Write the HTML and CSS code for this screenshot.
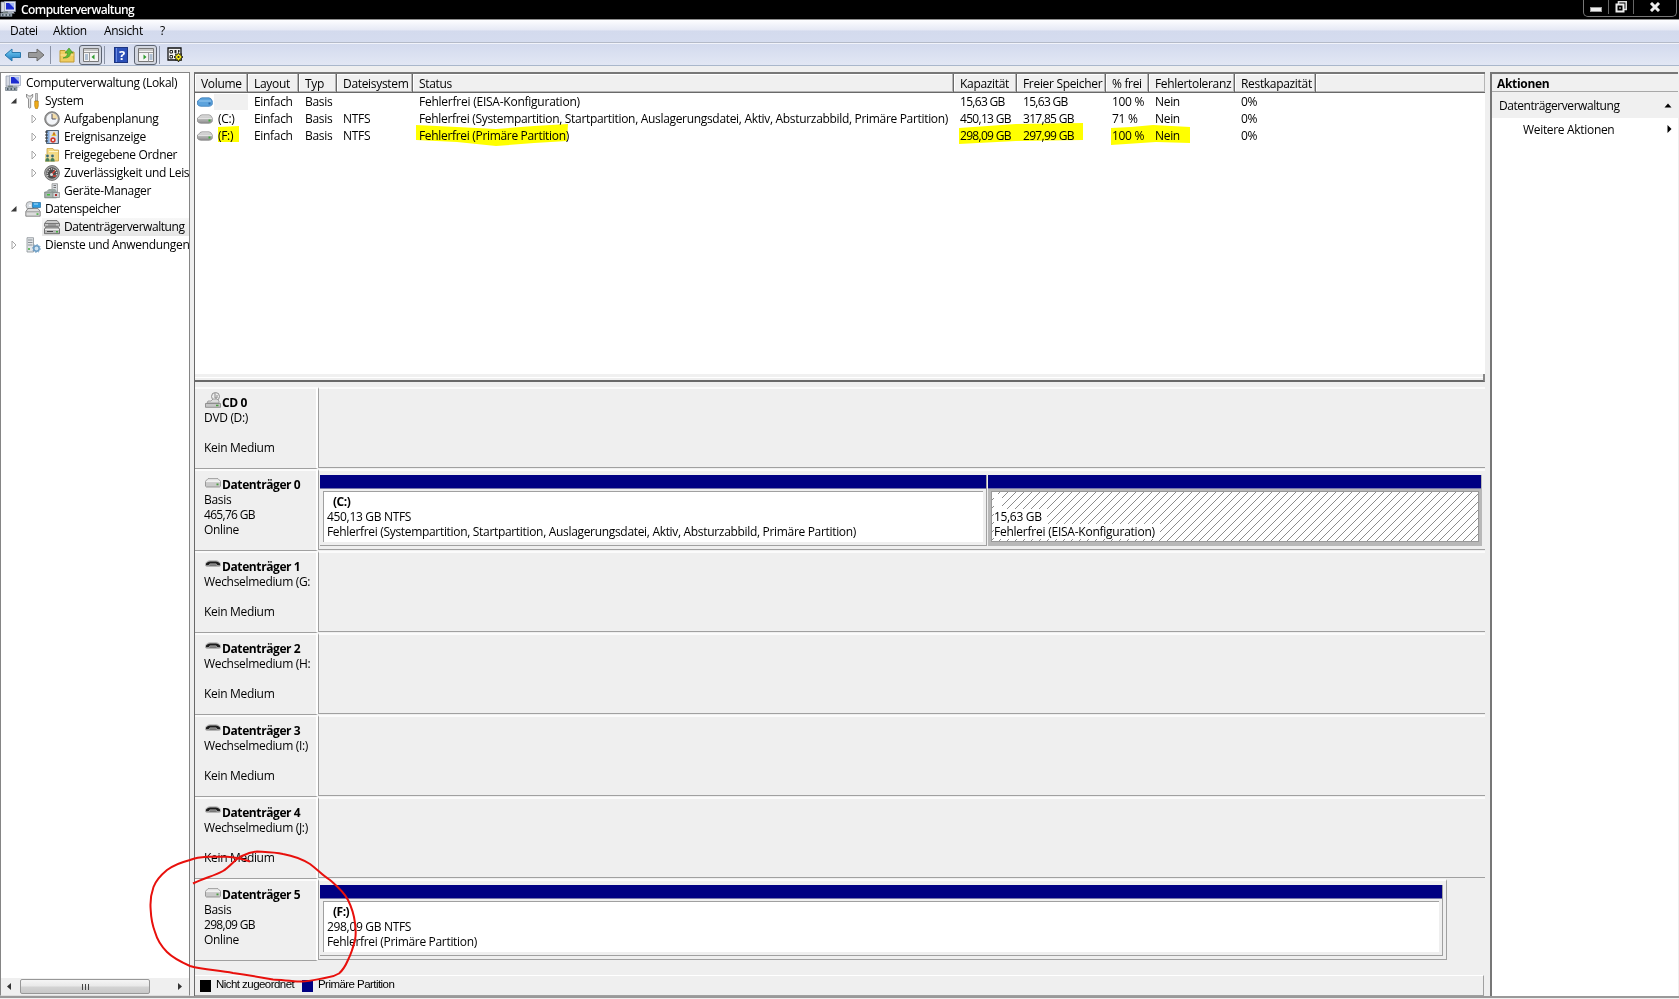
FILE: index.html
```html
<!DOCTYPE html>
<html lang="de">
<head>
  <meta charset="UTF-8">
  <meta name="viewport" content="width=device-width, initial-scale=1.0">
  <title>Computerverwaltung</title>
  <link rel="stylesheet" href="styles.css">
</head>
<body>
  <!-- Symbole -->
  <svg class="defs" width="0" height="0">
    <defs>
      <linearGradient id="metal" x1="0" y1="0" x2="0" y2="1"><stop offset="0" stop-color="#e4e4e4"/><stop offset="1" stop-color="#8c8c8c"/></linearGradient>
      <linearGradient id="blue" x1="0" y1="0" x2="0" y2="1"><stop offset="0" stop-color="#7fd4f7"/><stop offset="1" stop-color="#1878c0"/></linearGradient>
      <pattern id="hatch" width="8" height="8" patternUnits="userSpaceOnUse"><path d="M-1 9L9-1M-1 1L1-1M7 9L9 7" stroke="#8c8c8c" stroke-width="1"/></pattern>
    </defs>
    <symbol id="i-computer" viewBox="0 0 16 16">
      <path d="M1 1h4v10H1z" fill="#d5d9e2" stroke="#8a93a5" stroke-width=".7"/>
      <path d="M4.500 .5h11v10h-11z" fill="#dfe3ee" stroke="#9aa3b8" stroke-width=".7"/>
      <path d="M6 2h8v6.500H6z" fill="#1c2cd0"/><path d="M9 2h5v5z" fill="#9fb4f4"/>
      <path d="M8 10.500h5l2 2H7z" fill="#c2c8d4"/>
      <path d="M.5 12h11.500v3.500H.5z" fill="#a9b3bd" stroke="#5f6c76" stroke-width=".6"/><path d="M2 13h1.500v2H2zM5.500 13H7v2H5.500zM9 13h1.500v2H9z" fill="#4f5f68"/><path d="M3 10.700h5V12H3z" fill="#75837f"/>
    </symbol>
    <symbol id="i-disk" viewBox="0 0 16 10">
      <path d="M1 4Q3 .8 5 .8h7q2 0 3.300 3.200v3.500Q14 9.300 12 9.300H4Q1.500 9.300.5 7.500V4z" fill="url(#metal)" stroke="#777" stroke-width=".6"/>
      <path d="M1 4.300h14" stroke="#f7f7f7" stroke-width=".8"/><rect x="11.500" y="5.500" width="2" height="2" fill="#3fae3a"/>
    </symbol>
    <symbol id="i-diskblue" viewBox="0 0 16 10">
      <path d="M1 4Q3 .8 5 .8h7q2 0 3.300 3.200v3.500Q14 9.300 12 9.300H4Q1.500 9.300.5 7.500V4z" fill="#5da3dc" stroke="#2f74b4" stroke-width=".7"/>
      <path d="M2 4h12" stroke="#9fd0f4" stroke-width=".9"/><rect x="11.500" y="5.500" width="2" height="2" fill="#2c6aa8"/>
    </symbol>
    <symbol id="i-flat" viewBox="0 0 16 10">
      <path d="M3 .7h10l2.500 2.500v5l-1 .8h-13l-1-.8V3.200z" fill="#c9c9c9" stroke="#858585" stroke-width=".8"/>
      <path d="M3 1.300h10l1.700 1.900H1.300z" fill="#ececec"/>
      <path d="M.8 3.600h14.400" stroke="#f4f4f4"/><path d="M11.500 5.500h2v1.800h-2z" fill="#4a9c40"/>
    </symbol>
    <symbol id="i-removable" viewBox="0 0 16 8">
      <path d="M0 4Q2 .3 5 .3h6q3 0 5 3.700v1.500q-1 1.500-3 1.500H3Q1 7 0 5.500z" fill="#b5b5b5"/>
      <path d="M1 3.500Q3 1.500 5 1.500h6q2 0 4 2v1.700h-2.500L11 3.500H5L3.500 5.200H1z" fill="#1c1c1c"/>
      <path d="M5 4.200h6l1 1.800H4z" fill="#777"/>
    </symbol>
    <symbol id="i-cd" viewBox="0 0 16 16">
      <circle cx="10.500" cy="4.500" r="4" fill="#ededed" stroke="#8e8e8e"/><path d="M10 1v5h2M12 3v3" stroke="#888" fill="none"/>
      <path d="M3 9h3l2-2h4l2 2v2H2z" fill="#ddd" stroke="#909090" stroke-width=".8"/>
      <path d="M.5 11.500h15v3.800H.5z" fill="#c6c6c6" stroke="#7f7f7f" stroke-width=".8"/><path d="M11 12.700h2.500v1.500H11z" fill="#4a9c40"/>
    </symbol>
    <symbol id="i-tools" viewBox="0 0 16 16">
      <path d="M1.500 1v3l2 2v8.500q1 1.300 2.200 0V6l2-2V1L6 3H3.500z" fill="#e4e4e4" stroke="#777" stroke-width=".8"/>
      <path d="M10.500.5h2V8h-2z" fill="#ccc" stroke="#777" stroke-width=".6"/><path d="M9.700 8h3.600v5l-.8 2.500h-2l-.8-2.500z" fill="#f0ac18" stroke="#a87408" stroke-width=".6"/>
    </symbol>
    <symbol id="i-clock" viewBox="0 0 16 16">
      <circle cx="8" cy="8" r="7.300" fill="#9b9b9b" stroke="#666" stroke-width=".8"/><circle cx="8" cy="8" r="5.700" fill="#f3f5f8"/>
      <path d="M8 8V2.300A5.700 5.700 0 0 1 13.700 8z" fill="#f2dca8"/><path d="M8 3v5h3.800" fill="none" stroke="#556"/>
    </symbol>
    <symbol id="i-event" viewBox="0 0 16 16">
      <path d="M2.500 1.500h12v13h-12z" fill="#86aede" stroke="#456" stroke-width=".9"/><path d="M5.500 2h8v12h-8z" fill="#d9dde9"/>
      <path d="M1 3h3M1 6h3M1 9h3M1 12h3" stroke="#333"/><path d="M10 2.500l2.700 4.500H7.300z" fill="#e8c838"/><path d="M10 3.700v2.500" stroke="#a22"/>
      <circle cx="9" cy="11" r="2.700" fill="#d23a2e"/><path d="M8 10l2 2M10 10l-2 2" stroke="#fff" stroke-width=".8"/>
    </symbol>
    <symbol id="i-folder" viewBox="0 0 16 16">
      <path d="M3 1.500h6l1 1.500h4.500v11H3z" fill="#f5da82" stroke="#c9a040" stroke-width=".8"/><path d="M5 4.500h9" stroke="#fff5cc"/>
      <path d="M1 7h10v8H1z" fill="#eadb9a"/><circle cx="3.500" cy="9" r="1.400" fill="#3c6a74"/><circle cx="8.500" cy="9" r="1.400" fill="#3c6a74"/>
      <path d="M1.300 14.500q0-3.500 2.200-3.500t2.200 3.500zM6.300 14.500q0-3.500 2.200-3.500t2.200 3.500z" fill="#4a7f58"/>
    </symbol>
    <symbol id="i-gauge" viewBox="0 0 16 16">
      <circle cx="8" cy="8" r="7.400" fill="#aaa" stroke="#555" stroke-width=".8"/><circle cx="8" cy="8" r="5.800" fill="#4b4b4b"/>
      <path d="M4 11a4.700 4.700 0 1 1 8 0" fill="none" stroke="#ddd" stroke-width="1.300" stroke-dasharray="1.200 1"/><path d="M7.500 9.500l3.500-4M9 11h3" stroke="#e04438" stroke-width="1.300"/><circle cx="7.500" cy="9.500" r="1.500" fill="#ddd"/>
    </symbol>
    <symbol id="i-device" viewBox="0 0 16 16">
      <path d="M8 .7h5.500V10H8z" fill="#d8dce0" stroke="#888" stroke-width=".7"/><path d="M9.500 2.500H12M9.500 4.500H12" stroke="#777"/>
      <path d="M2 8.500L5 6h6l2 2.500z" fill="#9ca8a4"/><path d="M.7 9h11.800v5.800H.7z" fill="#a9b5b0" stroke="#60706a" stroke-width=".7"/>
      <path d="M9 9.500h6.500v5H9z" fill="#cfd4d6" stroke="#777" stroke-width=".6"/><path d="M3 11h3v1.500H3z" fill="#44c03c"/><path d="M11 11h2v2h-2z" fill="#b03030"/>
    </symbol>
    <symbol id="i-storage" viewBox="0 0 16 16">
      <circle cx="5" cy="4.500" r="4" fill="#d6dadf" stroke="#888" stroke-width=".7"/><circle cx="5" cy="4.500" r="1" fill="#fff"/>
      <path d="M7.500 1.500h8v5h-8z" fill="#2d9ce0" stroke="#145f94" stroke-width=".6"/><path d="M9 3h4" stroke="#b4e0fa"/>
      <path d="M.8 10.500L3 7.500h10l2.200 3v4.700H.8z" fill="#dcdcdc" stroke="#6f6f6f" stroke-width=".8"/><path d="M1 10.800h14" stroke="#999"/><path d="M11.500 12.300h2v1.500h-2z" fill="#3fae3a"/>
    </symbol>
    <symbol id="i-diskmgmt" viewBox="0 0 16 16">
      <path d="M3 1.500h10l2.500 3v2.700H.5V4.500z" fill="#c9c9c9" stroke="#666" stroke-width=".8"/><path d="M.8 4.500h14.500M4 6h8" stroke="#777"/>
      <path d="M2 8h12l1.500 2v4.700H.5V10z" fill="#b9b9b9" stroke="#555" stroke-width=".8"/><path d="M1 10.500h14" stroke="#eee"/><path d="M3 12.500h6" stroke="#444"/><path d="M12 12h2v1.500h-2z" fill="#3fae3a"/>
    </symbol>
    <symbol id="i-services" viewBox="0 0 16 16">
      <path d="M2 .7h6.500V15H2z" fill="#e2e5e8" stroke="#8c9298" stroke-width=".8"/><path d="M3 3h4.500M3 5.500h4.500M3 8h4.500" stroke="#8a9095"/><path d="M3 12h2" stroke="#3fae3a" stroke-width="1.500"/>
      <circle cx="11.500" cy="11.500" r="2.700" fill="#cfe3f2" stroke="#6a9cc4" stroke-width="1.500"/><circle cx="11.500" cy="11.500" r="3.900" fill="none" stroke="#6a9cc4" stroke-dasharray="1.400 1.600"/>
    </symbol>
    <symbol id="i-open" viewBox="0 0 8 8"><path d="M6.500 1v5.500H.8z" fill="#3a3a3a"/></symbol>
    <symbol id="i-closed" viewBox="0 0 8 10"><path d="M2 1l4 4-4 4z" fill="#fff" stroke="#a6a6a6"/></symbol>
  </svg>

  <div class="window">
    <header class="titlebar">
      <svg class="title-icon" width="16" height="16"><use href="#i-computer"/></svg>
      <span class="title">Computerverwaltung</span>
      <div class="window-buttons">
        <span class="wbtn wbtn-min"><svg width="12" height="5"><rect x=".5" y=".5" width="11" height="4" fill="#eee" stroke="#999"/></svg></span>
        <span class="wbtn wbtn-max"><svg width="12" height="12"><path d="M3.500 3V.8h7.700v7.700H9" fill="none" stroke="#ddd" stroke-width="1.600"/><rect x="1.500" y="3.500" width="7" height="7" fill="none" stroke="#eee" stroke-width="2"/><path d="M4 6.500h2v1H4z" fill="#eee"/></svg></span>
        <span class="wbtn wbtn-close"><svg width="12" height="10"><path d="M2 1l8 8M10 1L2 9" stroke="#eee" stroke-width="3"/></svg></span>
      </div>
    </header>
    <nav class="menubar">
      <span class="m-datei">Datei</span><span class="m-aktion">Aktion</span><span class="m-ansicht">Ansicht</span><span>?</span>
    </nav>
    <div class="toolbar">
      <svg class="t-back" width="18" height="16"><path d="M1 8l7-6v3.500h8.500v5H8V14z" fill="url(#blue)" stroke="#2a78ac"/></svg>
      <svg class="t-fwd" width="18" height="16"><path d="M17 8l-7-6v3.500H1.500v5H10V14z" fill="#9a9a9a" stroke="#6c6c6c"/></svg>
      <span class="sep"></span>
      <svg class="t-up" width="16" height="16"><path d="M1 3.500h5L7.500 5H15v10H1z" fill="#f0cd60" stroke="#c09a34"/><path d="M1.500 8h13" stroke="#fbe8a0"/><path d="M4 11q4.500-1 4.500-5H6l4-5 4 5h-2.500q0 5.500-7.500 5z" fill="#62bd38" stroke="#3c8c20" stroke-width=".6"/></svg>
      <span class="pressed">
        <svg width="16" height="14"><path d="M.5.5h15v13H.5z" fill="#f4f4f4" stroke="#777"/><path d="M1 2h14M1 4.500h14" stroke="#999"/><path d="M6.500 5v8.500" stroke="#999"/><path d="M2 7h3M2 9h3M2 11h3" stroke="#6a8ab0"/><path d="M11.500 6.500v5L8.500 9z" fill="#2f9c2f"/></svg>
      </span>
      <span class="sep sep-tight"></span>
      <svg class="t-help" width="14" height="16"><rect x=".5" y=".5" width="13" height="15" fill="#2c50b8" stroke="#1c3480"/><path d="M2.500 1v14" stroke="#6b8ae0"/><text x="8" y="13" text-anchor="middle" class="help-mark">?</text></svg>
      <span class="pressed">
        <svg width="16" height="14"><path d="M.5.5h15v13H.5z" fill="#f4f4f4" stroke="#777"/><path d="M1 2h14M1 4.500h14" stroke="#999"/><path d="M10.500 5v8.500" stroke="#999"/><path d="M11.500 7h3M11.500 9h3M11.500 11h3" stroke="#6a8ab0"/><path d="M5.500 6.500v5l3-2.500z" fill="#2f9c2f"/></svg>
      </span>
      <span class="sep sep-tight"></span>
      <svg class="t-props" width="17" height="16"><path d="M1 1h13v12H1z" fill="#f2f2f2" stroke="#111" stroke-width="1.300"/><path d="M3 3.500h2.500v2.500H3zM3 8.500h2.500V11H3z" fill="none" stroke="#222"/><path d="M7.500 3h2v3h-2zM11 3h1.500v2H11zM7.500 9h1v2h-1z" fill="#222"/><path d="M11.500 5.500l1 2 2-.7-.6 2 2.100 1.200-2.100 1.200.6 2-2-.5-1 2.300-1-2.300-2 .5.600-2L7 10l2.100-1.200-.6-2 2 .7z" fill="#f4e820" stroke="#111" stroke-width=".9"/><circle cx="11.500" cy="10" r="1.100" fill="#222"/></svg>
    </div>

    <main class="content">
      <!-- Navigationsbaum -->
      <aside class="tree-panel">
        <ul class="tree">
          <li class="root"><svg class="icon"><use href="#i-computer"/></svg><span>Computerverwaltung (Lokal)</span></li>
          <li class="lvl1"><svg class="twist"><use href="#i-open"/></svg><svg class="icon"><use href="#i-tools"/></svg><span>System</span></li>
          <li class="lvl2"><svg class="twist"><use href="#i-closed"/></svg><svg class="icon"><use href="#i-clock"/></svg><span>Aufgabenplanung</span></li>
          <li class="lvl2"><svg class="twist"><use href="#i-closed"/></svg><svg class="icon"><use href="#i-event"/></svg><span>Ereignisanzeige</span></li>
          <li class="lvl2"><svg class="twist"><use href="#i-closed"/></svg><svg class="icon"><use href="#i-folder"/></svg><span>Freigegebene Ordner</span></li>
          <li class="lvl2"><svg class="twist"><use href="#i-closed"/></svg><svg class="icon"><use href="#i-gauge"/></svg><span>Zuverlässigkeit und Leis</span></li>
          <li class="lvl2"><svg class="twist"></svg><svg class="icon"><use href="#i-device"/></svg><span>Geräte-Manager</span></li>
          <li class="lvl1"><svg class="twist"><use href="#i-open"/></svg><svg class="icon"><use href="#i-storage"/></svg><span class="narrow">Datenspeicher</span></li>
          <li class="lvl2 selected"><svg class="twist"></svg><svg class="icon"><use href="#i-diskmgmt"/></svg><span class="narrow">Datenträgerverwaltung</span></li>
          <li class="lvl1"><svg class="twist"><use href="#i-closed"/></svg><svg class="icon"><use href="#i-services"/></svg><span>Dienste und Anwendungen</span></li>
        </ul>
        <div class="scrollbar">
          <svg width="15" height="15"><path d="M9 4v7L5 7.500z" fill="#333"/></svg>
          <div class="thumb"><i></i><i></i><i></i></div>
          <svg class="s-right" width="15" height="15"><path d="M6 4v7l4-3.500z" fill="#333"/></svg>
        </div>
      </aside>

      <section class="center">
        <div class="volumes">
          <div class="vrow vhead">
            <span>Volume</span><span>Layout</span><span>Typ</span><span>Dateisystem</span><span>Status</span><span>Kapazität</span><span>Freier Speicher</span><span>% frei</span><span>Fehlertoleranz</span><span>Restkapazität</span><span></span>
          </div>
          <div class="vrow">
            <span class="vol"><svg width="16" height="10"><use href="#i-diskblue"/></svg><b class="vol-sel"></b></span><span>Einfach</span><span>Basis</span><span></span><span class="wide">Fehlerfrei (EISA-Konfiguration)</span><span class="num">15,63 GB</span><span class="num">15,63 GB</span><span>100 %</span><span>Nein</span><span>0%</span>
          </div>
          <div class="vrow">
            <span class="vol"><svg width="16" height="10"><use href="#i-disk"/></svg>(C:)</span><span>Einfach</span><span>Basis</span><span>NTFS</span><span>Fehlerfrei (Systempartition, Startpartition, Auslagerungsdatei, Aktiv, Absturzabbild, Primäre Partition)</span><span class="num">450,13 GB</span><span class="num">317,85 GB</span><span>71 %</span><span>Nein</span><span>0%</span>
          </div>
          <div class="vrow">
            <span class="vol"><svg width="16" height="10"><use href="#i-disk"/></svg>(F:)</span><span>Einfach</span><span>Basis</span><span>NTFS</span><span>Fehlerfrei (Primäre Partition)</span><span class="num">298,09 GB</span><span class="num">297,99 GB</span><span>100 %</span><span>Nein</span><span>0%</span>
          </div>
        </div>
        <div class="splitter"></div>

        <div class="disks">
          <div class="disk">
            <div class="disk-label"><h3><svg class="cd" width="16" height="16"><use href="#i-cd"/></svg>CD 0</h3><p>DVD (D:)</p><p></p><p>Kein Medium</p></div>
            <div class="disk-body"></div>
          </div>
          <div class="disk">
            <div class="disk-label"><h3><svg width="16" height="10"><use href="#i-flat"/></svg>Datenträger 0</h3><p>Basis</p><p class="num">465,76 GB</p><p>Online</p></div>
            <div class="disk-body">
              <div class="part part-c">
                <div class="bar"></div>
                <div class="part-box"><h4>(C:)</h4><p>450,13 GB NTFS</p><p>Fehlerfrei (Systempartition, Startpartition, Auslagerungsdatei, Aktiv, Absturzabbild, Primäre Partition)</p></div>
              </div>
              <div class="part part-eisa">
                <div class="bar"></div>
                <div class="part-box hatched">
                  <svg class="hatch-fill"><rect width="100%" height="100%" fill="url(#hatch)"/></svg>
                  <h4><span>&nbsp;</span></h4><p><span>15,63 GB</span></p><p><span class="wide">Fehlerfrei (EISA-Konfiguration)</span></p>
                </div>
              </div>
            </div>
          </div>
          <div class="disk">
            <div class="disk-label"><h3><svg class="rem" width="16" height="8"><use href="#i-removable"/></svg>Datenträger 1</h3><p>Wechselmedium (G:</p><p></p><p>Kein Medium</p></div>
            <div class="disk-body"></div>
          </div>
          <div class="disk">
            <div class="disk-label"><h3><svg class="rem" width="16" height="8"><use href="#i-removable"/></svg>Datenträger 2</h3><p>Wechselmedium (H:</p><p></p><p>Kein Medium</p></div>
            <div class="disk-body"></div>
          </div>
          <div class="disk">
            <div class="disk-label"><h3><svg class="rem" width="16" height="8"><use href="#i-removable"/></svg>Datenträger 3</h3><p>Wechselmedium (I:)</p><p></p><p>Kein Medium</p></div>
            <div class="disk-body"></div>
          </div>
          <div class="disk">
            <div class="disk-label"><h3><svg class="rem" width="16" height="8"><use href="#i-removable"/></svg>Datenträger 4</h3><p>Wechselmedium (J:)</p><p></p><p>Kein Medium</p></div>
            <div class="disk-body"></div>
          </div>
          <div class="disk disk-last">
            <div class="disk-label"><h3><svg width="16" height="10"><use href="#i-flat"/></svg>Datenträger 5</h3><p>Basis</p><p class="num">298,09 GB</p><p>Online</p></div>
            <div class="disk-body">
              <div class="part part-f">
                <div class="bar"></div>
                <div class="part-box"><h4>(F:)</h4><p>298,09 GB NTFS</p><p>Fehlerfrei (Primäre Partition)</p></div>
              </div>
            </div>
          </div>
        </div>

        <footer class="legend">
          <i class="sw sw-black"></i><span class="leg1">Nicht zugeordnet</span><i class="sw sw-blue"></i><span>Primäre Partition</span>
        </footer>
      </section>

      <!-- Aktionsbereich -->
      <aside class="actions">
        <h2>Aktionen</h2>
        <div class="act-group"><span class="narrow">Datenträgerverwaltung</span><svg width="8" height="5"><path d="M.5 4.500L4 .5l3.500 4z" fill="#000"/></svg></div>
        <div class="act-item"><span>Weitere Aktionen</span><svg width="5" height="8"><path d="M.5 0v8l4-4z" fill="#000"/></svg></div>
      </aside>
    </main>
  </div>

  <!-- Textmarker und roter Kreis liegen über dem Fenster -->
  <svg class="marker" viewBox="0 0 1679 999">
    <path d="M218 127l21-1v16h-21zM416 125l41 2 39 2 38-3 34-2-1 17-33 2-38 3-39-4-41-2zM959 128l57-4 67-1v17l-67 1-57 3zM1111 128l20-1 22-2 37 2v16l-34-1-45 3z" fill="#ff0"/>
  </svg>
  <svg class="circle" viewBox="0 0 1679 999">
    <path d="M193 883.500C204 878 214 876 223 871C230 867 233 861 240 857C246 854 249 852 257 851.500C266 852 274 852 283 854C294 856 302 859 310 864C318 870 322 875 330 880C338 887 344 892 348 900C352 908 354 915 355 923C356 930 356 935 355 940C353 948 351 954 348 960C345 967 343 970 339 973.500C335 976 331 977 327 977.500C318 979 309 982 300 981.500C290 981 282 980 273 979.500C260 977 247 975 233 973C218 970 204 970 190 966C181 962 173 958 167 952C161 946 157 939 155 932C152 924 151 917 150.700 910C150 902 151 894 153.500 887C156 880 161 875 167 870C174 865 182 862 190 860C195 858 201 857 207 856.700H227C235 857 243 859 250 861.500" fill="none" stroke="#e8100c" stroke-width="2"/>
  </svg>
</body>
</html>
```
FILE: styles.css
```css
* {
  box-sizing: border-box;
  margin: 0;
  padding: 0;
}

:root {
  --face: #efefef;
  --line: #a0a0a0;
  --dark: #696969;
  --navy: #000082;
}

body {
  width: 1679px;
  height: 999px;
  overflow: hidden;
  position: relative;
  background: var(--face);
  color: #000;
  font-family: "Open Sans", "Noto Sans", sans-serif;
  font-size: 12px;
  letter-spacing: -0.32px;
  line-height: 15px;
  white-space: nowrap;
}

svg { display: block; flex: none; }
.defs { position: absolute; }
.num { letter-spacing: -0.7px; }
.narrow { letter-spacing: -0.45px; }
.wide { letter-spacing: -0.24px; }

.window {
  display: flex;
  flex-direction: column;
  height: 999px;
}

/* Titelleiste */
.titlebar {
  display: flex;
  height: 20px;
  background: #000;
  border-bottom: 1px solid #8e8e8e;
  color: #fff;
}
.title-icon { margin-top: 1px; }
.title {
  margin: 2px 0 0 5px;
  font-weight: 600;
  letter-spacing: -0.58px;
}
.window-buttons {
  display: flex;
  margin-left: auto;
  margin-right: 2px;
  height: 17px;
  border: 1px solid #777;
  border-top: 0;
  border-radius: 0 0 5px 5px;
}
.wbtn {
  display: flex;
  justify-content: center;
  align-items: center;
  height: 14px;
  border-right: 1px solid #666;
}
.wbtn-min { width: 25px; padding-top: 4px; }
.wbtn-max { width: 25px; }
.wbtn-close { width: 42px; border-right: 0; }

.menubar {
  display: flex;
  height: 23px;
  padding: 3px 0 0 10px;
  background: linear-gradient(#fdfdff, #e6e9f5 45%, #d3daed 50%, #d5dcef);
  border-bottom: 1px solid #b4bac8;
}
.m-datei { width: 43px; }
.m-aktion { width: 51px; }
.m-ansicht { width: 56px; }

.toolbar {
  display: flex;
  align-items: center;
  height: 23px;
  padding-left: 4px;
  background: linear-gradient(#d3daee, #e2e7f4);
  border-bottom: 1px solid #a9b7cb;
  border-top: 1px solid #f1f3fa;
}
.t-fwd { margin-left: 5px; }
.sep {
  width: 1px;
  height: 18px;
  margin: 0 8px 0 5px;
  background: #8b93a5;
}
.sep-tight { margin: 0 9px 0 2px; }
.t-up { margin-right: 4px; }
.t-help { margin-right: 6px; }
.t-props { margin-left: -2px; }
.help-mark {
  fill: #fff;
  font-size: 13px;
  font-weight: 700;
}
.pressed {
  display: flex;
  justify-content: center;
  align-items: center;
  width: 23px;
  height: 20px;
  border: 1px solid #5d6472;
  border-radius: 3px;
  background: #d2d6e0;
}

.content {
  display: grid;
  grid-template-columns: 190px 1291px 189px;
  column-gap: 4px;
  height: 926px;
  margin-top: 6px;
  border-bottom: 2px solid #999;
}

/* Baum links */
.tree-panel {
  display: flex;
  flex-direction: column;
  justify-content: space-between;
  background: #fff;
  border: 1px solid #858585;
  border-bottom-color: #ddd;
  overflow: hidden;
}
.tree { list-style: none; padding: 1px 0 0 4px; }
.tree li {
  display: flex;
  align-items: center;
  height: 18px;
  overflow: hidden;
}
.icon { width: 16px; height: 16px; }
.twist { width: 8px; height: 10px; }
.tree span { padding: 0 1px 2px 4px; }
.tree .root span { padding-left: 5px; letter-spacing: -0.27px; }
.lvl1 { padding-left: 5px; }
.lvl1 .twist { margin-right: 7px; }
.lvl2 { padding-left: 25px; }
.lvl2 .twist { margin-right: 6px; }
.selected { background: linear-gradient(#f7f7f7, #e6e6e6) 37px 0 no-repeat; }

.scrollbar {
  display: flex;
  align-items: center;
  height: 17px;
  padding: 0 2px 0 1px;
  background: #efefef;
}
.thumb {
  display: flex;
  justify-content: center;
  align-items: center;
  gap: 2px;
  width: 130px;
  height: 15px;
  margin-left: 3px;
  border: 1px solid #979797;
  border-radius: 2px;
  background: linear-gradient(#f5f5f5, #e8e8e8 48%, #d3d3d3 52%, #c8c8c8);
}
.thumb i { width: 1px; height: 6px; background: #444; }
.s-right { margin-left: auto; }

/* Volumeliste */
.center {
  display: flex;
  flex-direction: column;
  border-left: 1px solid var(--dark);
  border-top: 2px solid #777;
  background: var(--face);
}
.volumes { height: 300px; background: #fff; }
.vrow {
  display: grid;
  grid-template-columns: 53px 51px 38px 76px 541px 63px 89px 43px 86px 81px 1fr;
  height: 17px;
}
.vrow span { padding: 1px 0 0 6px; }
.vhead { height: 19px; }
.vhead span {
  padding-top: 2px;
  background: #f0f0f0;
  border-right: 1px solid var(--dark);
  border-bottom: 1px solid var(--dark);
  box-shadow: inset -1px -1px #b5b5b5, inset 1px 1px #fff;
}
.vhead span:last-child { border-right: 0; }
.vrow .vol { display: flex; padding-left: 2px; }
.vol svg { margin: 3px 5px 0 0; }
.vol-sel { width: 35px; height: 16px; margin-left: -4px; background: #f0f0f0; }

.splitter {
  height: 8px;
  background: var(--face);
  border-right: 2px solid #888;
  border-bottom: 2px solid var(--dark);
  box-shadow: inset 0 3px #f0f0f0, inset 0 4px #fff;
}

/* Grafische Ansicht */
.disks { padding-top: 5px; height: 593px; }
.disk { display: flex; height: 82px; }
.disk-label {
  width: 123px;
  height: 82px;
  padding: 6px 4px 0 9px;
  overflow: hidden;
  border-top: 2px solid #fbfbfb;
  border-bottom: 1px solid var(--line);
  border-right: 2px solid #fff;
}
.disk p { height: 15px; overflow: hidden; }
.disk h3 {
  display: flex;
  height: 15px;
  font-size: 12px;
  font-weight: 700;
  letter-spacing: -0.4px;
}
.disk h3 svg { margin: 1px 1px 0 1px; }
.disk h3 .cd { margin-top: -3px; }
.disk-body {
  display: flex;
  flex: 1;
  height: 81px;
  padding: 4px 0 0 1px;
  border-left: 1px solid var(--line);
  border-top: 2px solid #fbfbfb;
  border-bottom: 1px solid var(--line);
}
.disk-last .disk-body {
  flex: none;
  width: 1129px;
  border-right: 1px solid var(--line);
}
.part { height: 71px; border-right: 1px solid var(--line); border-bottom: 1px solid var(--line); }
.part-c { width: 667px; }
.part-eisa { width: 494px; margin-left: 1px; background: #b8b8b8; border-color: #b8b8b8; }
.part-f { width: 1123px; }
.bar {
  height: 14px;
  background: var(--navy);
  border-bottom: 1px solid #77a;
}
.part-box {
  height: 51px;
  margin: 2px 3px 0;
  padding: 2px 0 0 3px;
  background: #fff;
  border-top: 1px solid var(--line);
  border-left: 1px solid var(--line);
}
.part-box h4 { height: 15px; padding-left: 6px; font-size: 12px; letter-spacing: -0.5px; }
.hatched {
  position: relative;
  margin-right: 2px;
  padding-left: 2px;
  border: 1px solid #999;
}
.hatched h4 { padding: 0; }
.hatched h4 span, .hatched p span {
  position: relative;
  display: inline-block;
  padding-right: 5px;
  background: #fff;
}
.hatch-fill { position: absolute; inset: 0; width: 100%; height: 100%; }

.legend {
  display: flex;
  align-items: center;
  height: 21px;
  margin-right: 1px;
  padding: 0 0 2px 5px;
  border-top: 1px solid #fff;
  border-right: 1px solid var(--line);
  border-bottom: 1px solid var(--line);
  font-family: "Liberation Sans", Arial, sans-serif;
  font-size: 11.5px;
  letter-spacing: -0.55px;
}
.sw { width: 11px; height: 12px; margin: 2px 5px 0 0; }
.sw-black { background: #000; }
.sw-blue { background: var(--navy); }
.leg1 { width: 86px; }

/* Aktionen */
.actions {
  margin-left: 1px;
  background: #fff;
  border-left: 2px solid #777;
  border-top: 2px solid #777;
}
.actions h2 {
  height: 18px;
  padding: 2px 0 0 5px;
  background: #f0f0f0;
  border-bottom: 1px solid #a8a8a8;
  font-size: 12px;
  line-height: 15px;
}
.act-group, .act-item {
  display: flex;
  justify-content: space-between;
  align-items: center;
  height: 26px;
  padding: 0 6px 0 7px;
}
.act-group { background: #f0f0f0; }
.act-item { height: 22px; padding-left: 31px; }

.marker, .circle {
  position: absolute;
  top: 0;
  left: 0;
  width: 1679px;
  height: 999px;
  pointer-events: none;
}
.marker { mix-blend-mode: multiply; }
```
